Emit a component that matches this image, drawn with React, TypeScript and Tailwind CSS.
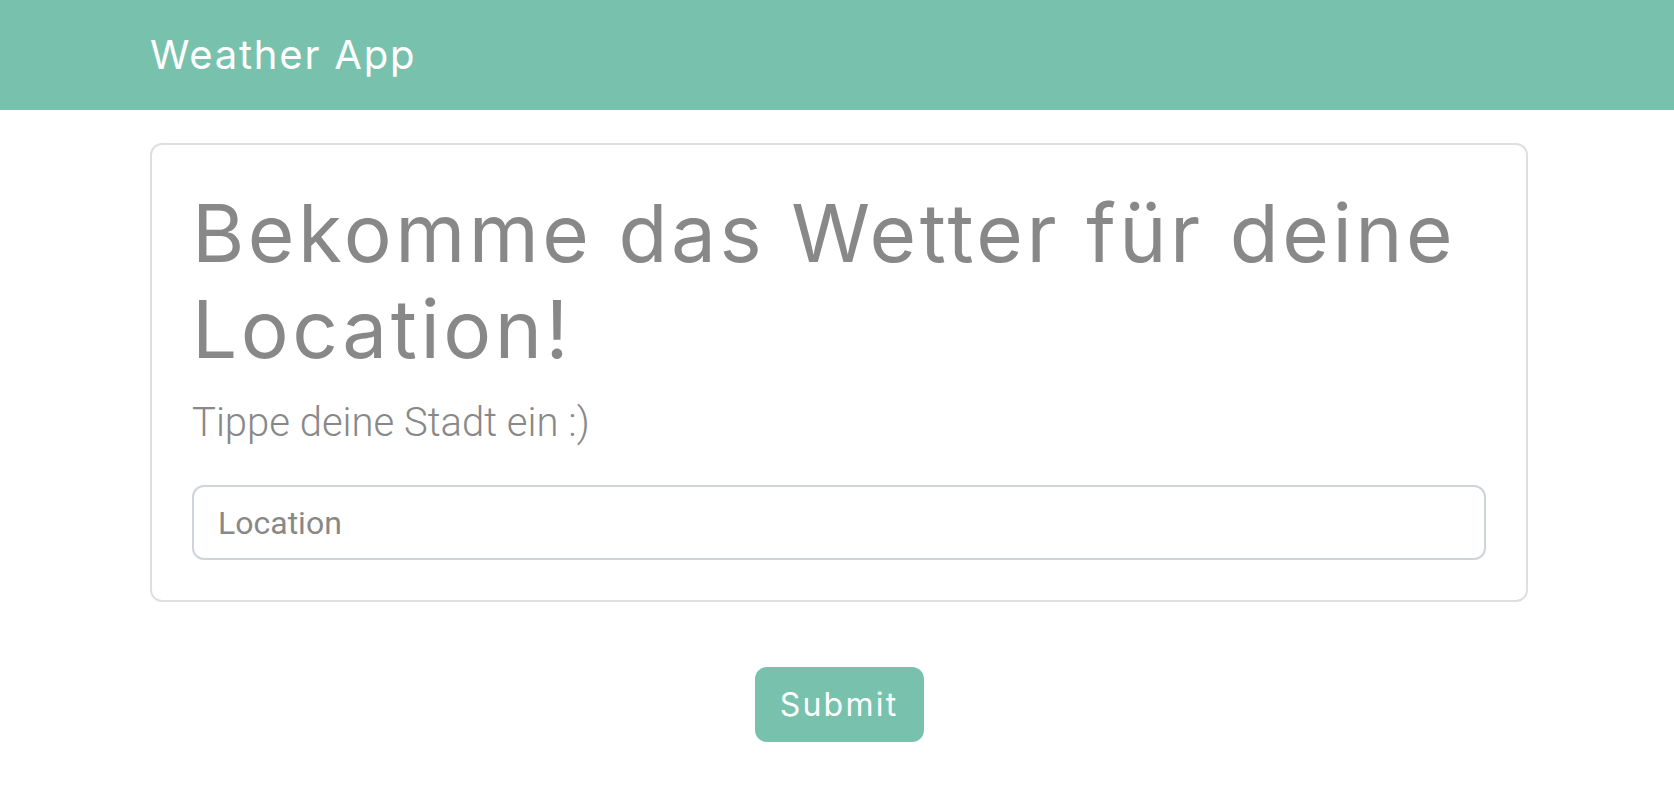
import React from 'react'

const App = () => {
    return (
        <div className='min-h-screen bg-white'>
            <nav className='h-[110px] bg-[#78c2ad] flex items-center'>
                <div className='w-[1378px] ml-[150px]'>
                    <span className="font-['Inter',sans-serif] text-[40px] leading-[60px] tracking-[0.045em] text-white">Weather App</span>
                </div>
            </nav>
            <main className='w-[1378px] ml-[150px] mt-[33px]'>
                <div className='border-2 border-[#dfdfdf] rounded-[12px] p-10'>
                    <h1 className="font-['Inter',sans-serif] font-normal text-[80px] leading-[96px] tracking-[0.044em] text-[#888] mb-4">
                        Bekomme das Wetter für deine Location!
                    </h1>
                    <p className="font-['Roboto',sans-serif] font-light text-[40px] leading-[60px] text-[#888] mb-8">Tippe deine Stadt ein :)</p>
                    <input
                        type='text'
                        placeholder='Location'
                        className="block w-full h-[75px] border-2 border-[#ced4da] rounded-[12px] px-6 font-['Roboto',sans-serif] text-[32px] text-[#888] placeholder:text-[#888] outline-none"
                    />
                </div>
                <div className='flex justify-center mt-[65px]'>
                    <button type='submit' className="h-[75px] w-[169px] bg-[#78c2ad] rounded-[12px] text-white font-['Inter',sans-serif] text-[32px] tracking-[0.07em]">
                        Submit
                    </button>
                </div>
            </main>
        </div>
    )
}

export default App
